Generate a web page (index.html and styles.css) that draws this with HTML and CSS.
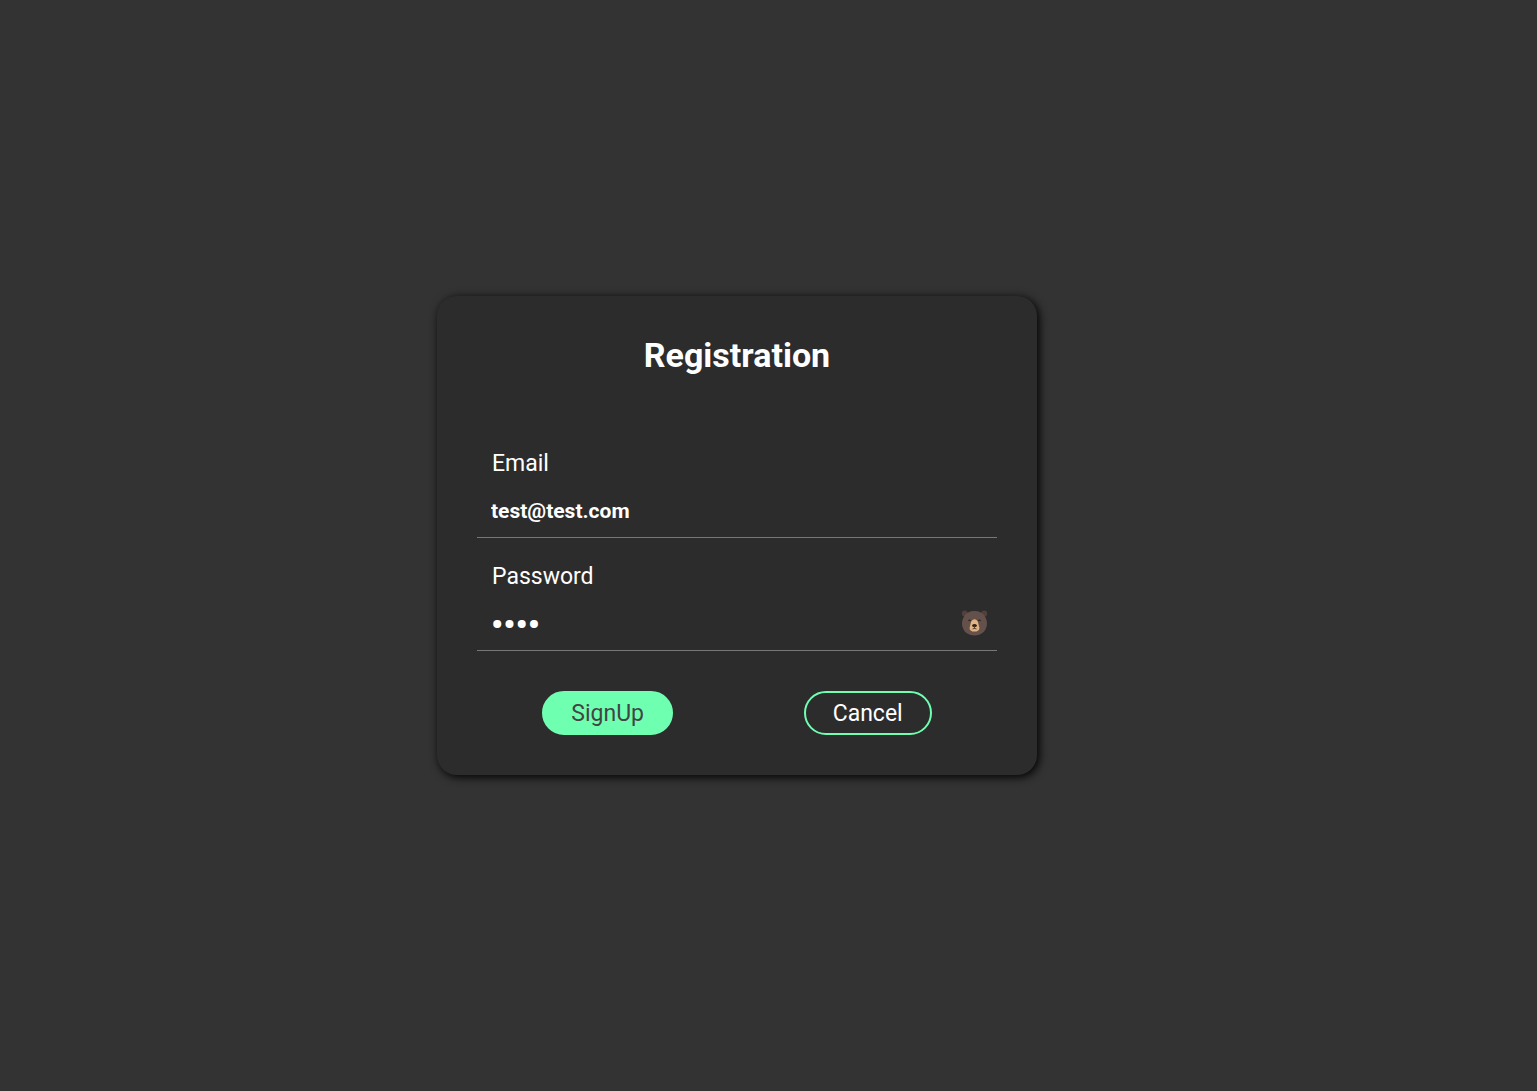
FILE: index.html
```
<!DOCTYPE html>
<html lang="en">
<head>
  <meta charset="utf-8">
  <meta name="viewport" content="width=device-width, initial-scale=1">
  <title>Registration</title>
  <link rel="stylesheet" href="styles.css">
</head>
<body>
  <main class="page">
    <form class="card">
      <h1 class="card-title">Registration</h1>
      <div class="field">
        <label class="field-label" for="email">Email</label>
        <div class="field-row">
          <input class="field-input" id="email" type="email" value="test@test.com">
        </div>
      </div>
      <div class="field">
        <label class="field-label" for="password">Password</label>
        <div class="field-row">
          <input class="field-input field-input-password" id="password" type="password" value="test">
          <button class="reveal" type="button" aria-label="Show password">
            <svg class="bear" viewBox="0 0 26 26" aria-hidden="true">
              <circle cx="3.3" cy="3.5" r="3" fill="#51403b"/>
              <circle cx="22.7" cy="3.5" r="3" fill="#51403b"/>
              <path d="M13 1C18 1 21.5 3 23.2 6C25 9 25.8 12 25.4 15C24.6 21.5 19.5 25.4 13 25.4S1.4 21.5.6 15C.2 12 1 9 2.8 6C4.5 3 8 1 13 1Z" fill="#64514b"/>
              <path d="M13 9.2C15.5 9.2 16.6 11.5 17 14.2L17.8 17.2C18.4 20.2 15.8 21.6 13 21.6S7.6 20.2 8.2 17.2L9 14.2C9.4 11.5 10.5 9.2 13 9.2Z" fill="#e0b483"/>
              <path d="M10.4 15.2Q13 12.9 15.6 15.2Q15.3 17 13 17.3Q10.7 17 10.4 15.2Z" fill="#30221d"/>
              <path d="M13 16.5v2.4M11 19Q13 17.8 15 19" fill="none" stroke="#604536" stroke-width="1"/>
              <path d="M7 10.8Q8 9.6 9.2 10.8M16.8 10.8Q18 9.6 19 10.8" fill="none" stroke="#30221d" stroke-width="1.2"/>
            </svg>
          </button>
        </div>
      </div>
      <div class="actions">
        <button class="button button-primary" type="submit">SignUp</button>
        <button class="button button-outline" type="button">Cancel</button>
      </div>
    </form>
  </main>
</body>
</html>
```
FILE: styles.css
```
* {
  box-sizing: border-box;
}

body {
  margin: 0;
  background: #333;
  color: #fff;
  font-family: Roboto, "Liberation Sans", sans-serif;
  font-size: 23px;
}

.page {
  min-height: 100vh;
  padding: 0 63px 20px 0;
  display: flex;
  align-items: center;
  justify-content: center;
}

.card {
  width: 100%;
  max-width: 600px;
  padding: 40px;
  border-radius: 20px;
  background: #2c2c2c;
  box-shadow: 2px 2px 10px #000;
}

.card-title {
  margin: 0 0 71px;
  font-size: 34px;
  line-height: 38px;
  font-weight: 700;
  text-align: center;
}

.field {
  margin-bottom: 20px;
}

.field-label {
  display: block;
  padding: 0 15px;
  line-height: 38px;
}

.field-row {
  display: flex;
  align-items: center;
  height: 55px;
  border-bottom: 1px solid #777;
}

.field-input {
  flex: 1;
  min-width: 0;
  height: 54px;
  padding: 2px 14px 0;
  border: 0;
  outline: 0;
  background: transparent;
  color: #fff;
  font: 700 21px Roboto, "Liberation Sans", sans-serif;
}

.field-input-password {
  font-size: 34px;
}

.reveal {
  margin-right: 9px;
  padding: 0;
  border: 0;
  background: none;
  cursor: pointer;
}

.bear {
  display: block;
  width: 27px;
  height: 26px;
}

.actions {
  display: flex;
  justify-content: space-around;
  padding-top: 20px;
}

.button {
  height: 44px;
  padding: 0 27px;
  border: 2px solid #6fffb0;
  border-radius: 22px;
  font: 23px Roboto, "Liberation Sans", sans-serif;
  cursor: pointer;
}

.button-primary {
  background: #6fffb0;
  color: #444;
}

.button-outline {
  background: transparent;
  color: #fff;
}
```
